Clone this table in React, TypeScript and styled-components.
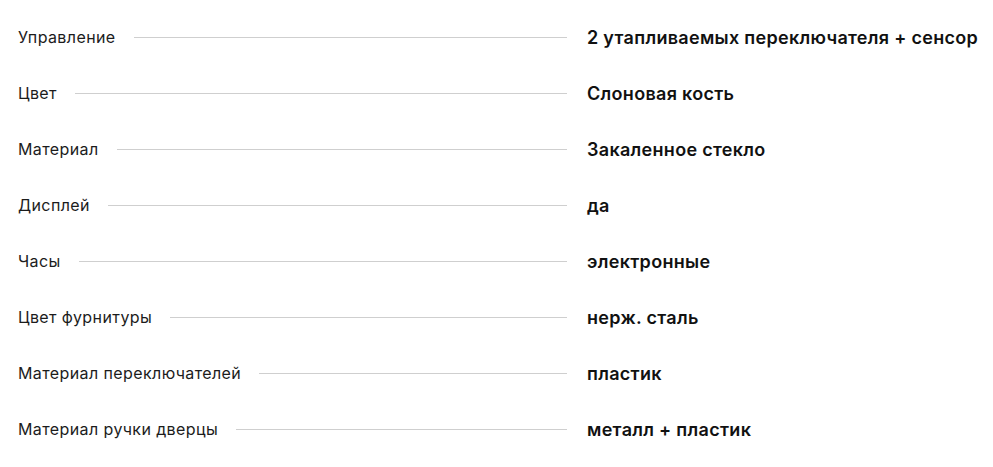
import React from "react";
import styled, { createGlobalStyle } from "styled-components";

interface Spec {
  label: string;
  value: string;
}

const specs: Spec[] = [
  { label: "Управление", value: "2 утапливаемых переключателя + сенсор" },
  { label: "Цвет", value: "Слоновая кость" },
  { label: "Материал", value: "Закаленное стекло" },
  { label: "Дисплей", value: "да" },
  { label: "Часы", value: "электронные" },
  { label: "Цвет фурнитуры", value: "нерж. сталь" },
  { label: "Материал переключателей", value: "пластик" },
  { label: "Материал ручки дверцы", value: "металл + пластик" },
];

const GlobalStyle = createGlobalStyle`
  body {
    margin: 0;
    background: #fff;
    font-family: Inter, "Noto Sans", sans-serif;
    color: #1a1a1a;
  }
`;

const List = styled.div`
  padding: 9px 0 10px 18px;
`;

const Row = styled.div`
  display: grid;
  grid-template-columns: 549px 1fr;
  column-gap: 20px;
  align-items: center;
  height: 56px;
`;

const LabelSide = styled.div`
  display: flex;
  align-items: center;
  gap: 18px;
`;

const Label = styled.span`
  font-size: 16px;
  font-weight: 400;
  letter-spacing: 0.4px;
  white-space: nowrap;
  color: #1c1c1c;
`;

const Leader = styled.span`
  flex: 1;
  height: 1px;
  background: #cfcfcf;
`;

const Value = styled.span`
  font-size: 18px;
  font-weight: 600;
  letter-spacing: 0.3px;
  white-space: nowrap;
  color: #111;
`;

export default function App() {
  return (
    <>
      <GlobalStyle />
      <List>
        {specs.map((spec) => (
          <Row key={spec.label}>
            <LabelSide>
              <Label>{spec.label}</Label>
              <Leader />
            </LabelSide>
            <Value>{spec.value}</Value>
          </Row>
        ))}
      </List>
    </>
  );
}
